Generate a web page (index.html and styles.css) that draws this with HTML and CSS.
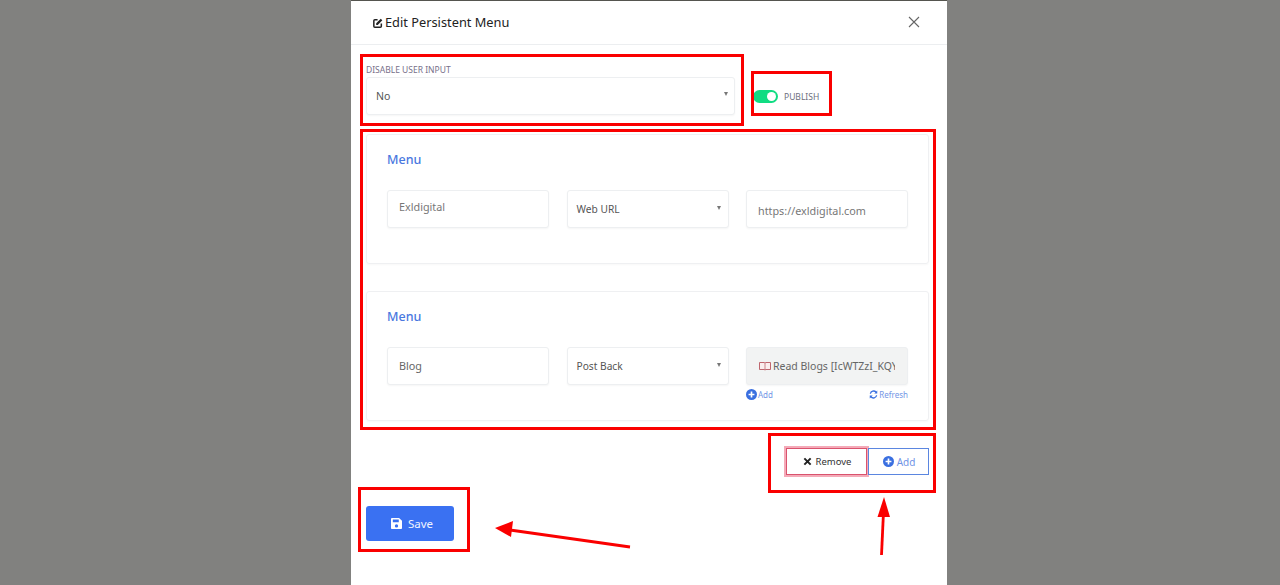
FILE: index.html
```html
<!DOCTYPE html>
<html lang="en">
<head>
<meta charset="utf-8">
<title>Edit Persistent Menu</title>
<link rel="stylesheet" href="styles.css">
</head>
<body>
<div class="modal">
  <header class="modal-header">
    <h1 class="modal-title">
      <svg class="icon-edit" viewBox="0 0 12 12"><path d="M5.500 2H2.200C1.500 2 1 2.500 1 3.200v6.600C1 10.500 1.500 11 2.200 11h6.600c.7 0 1.200-.5 1.200-1.200V6.500" fill="none" stroke="#222" stroke-width="1.800"/><path d="M3.800 6.400 9.300.9l1.900 1.900L5.700 8.300H3.800z" fill="#222"/></svg>
      <span>Edit Persistent Menu</span>
    </h1>
    <svg class="icon-close" viewBox="0 0 12 12"><path d="M1 1l10 10M11 1 1 11" fill="none" stroke="#666" stroke-width="1.100"/></svg>
  </header>
  <div class="modal-body">
    <div class="top-row">
      <div class="field-main">
        <label class="field-label">DISABLE USER INPUT</label>
        <div class="control select-main"><span>No</span><i class="caret"></i></div>
      </div>
      <div class="publish">
        <span class="toggle"><i class="knob"></i></span>
        <span class="publish-label">PUBLISH</span>
      </div>
    </div>

    <section class="card card-first">
      <h2 class="card-title">Menu</h2>
      <div class="card-grid">
        <div class="control text-high">Exldigital</div>
        <div class="control select-dark"><span>Web URL</span><i class="caret"></i></div>
        <div class="control text-low">https://exldigital.com</div>
      </div>
    </section>

    <section class="card">
      <h2 class="card-title">Menu</h2>
      <div class="card-grid">
        <div class="control text-plain">Blog</div>
        <div class="control select-dark"><span>Post Back</span><i class="caret"></i></div>
        <div class="col-with-links">
          <div class="control control-disabled">
            <svg class="icon-book" viewBox="0 0 12 10"><path d="M.5 1.500h4.700c.4 0 .8.300.8.700 0-.4.400-.7.800-.7h4.700v7H7c-.5 0-1 .3-1 .6 0-.3-.5-.6-1-.6H.5z" fill="#fbeeee" stroke="#b9565f" stroke-width=".9"/><path d="M6 2.200v6.800" stroke="#b9565f" stroke-width=".7"/></svg>
            <span class="clip-text">Read Blogs [IcWTZzI_KQYM</span>
          </div>
          <div class="links">
            <span class="link"><svg class="icon-plus-small" viewBox="0 0 12 12"><circle cx="6" cy="6" r="6" fill="#3a6fe0"/><path d="M6 2.800v6.400M2.800 6h6.400" stroke="#fff" stroke-width="1.800"/></svg>Add</span>
            <span class="link"><svg class="icon-refresh" viewBox="0 0 12 12"><path d="M1.800 5A4.300 4.300 0 0 1 9.400 3M10.200 7A4.300 4.300 0 0 1 2.600 9" fill="none" stroke="#3a6fe0" stroke-width="1.700"/><path d="M11 .8v4H7zM1 11.200v-4h4z" fill="#3a6fe0"/></svg>Refresh</span>
          </div>
        </div>
      </div>
    </section>

    <div class="actions">
      <button class="btn btn-remove"><svg class="icon-x" viewBox="0 0 10 10"><path d="M1.500 1.500l7 7M8.500 1.500l-7 7" stroke="#222" stroke-width="2.200"/></svg>Remove</button>
      <button class="btn btn-add"><svg class="icon-plus" viewBox="0 0 12 12"><circle cx="6" cy="6" r="6" fill="#3a6fe0"/><path d="M6 2.800v6.400M2.800 6h6.400" stroke="#fff" stroke-width="1.800"/></svg>Add</button>
    </div>

    <button class="btn-save"><svg class="icon-save" viewBox="0 0 12 12"><path fill-rule="evenodd" d="M1.200 0h7.600L12 3v7.800c0 .7-.5 1.200-1.200 1.200H1.200C.5 12 0 11.500 0 10.800V1.200C0 .5.500 0 1.200 0zM2 1.500v3h6.500v-3zM6 6.800a1.800 1.800 0 1 0 0 3.600 1.800 1.800 0 0 0 0-3.600z" fill="#fff"/></svg>Save</button>
  </div>
</div>

<div class="mark mark-select"></div>
<div class="mark mark-publish"></div>
<div class="mark mark-cards"></div>
<div class="mark mark-actions"></div>
<div class="mark mark-save"></div>
<svg class="arrows" viewBox="0 0 1280 585">
  <path d="M630 547 510 530" stroke="#fa0000" stroke-width="2.800" fill="none"/>
  <path d="M495 528 513 521 511 537z" fill="#fa0000"/>
  <path d="M881.500 555 883.500 512" stroke="#fa0000" stroke-width="2.800" fill="none"/>
  <path d="M884 497 890 517 877.500 517z" fill="#fa0000"/>
</svg>
</body>
</html>
```

FILE: styles.css
```css
* { box-sizing: border-box; }

html, body { height: 100%; }

body {
  margin: 0;
  background: #81817f;
  overflow: hidden;
  font-family: "Noto Sans", "Open Sans", "Liberation Sans", sans-serif;
  color: #555;
}

.modal {
  width: 596px;
  height: 585px;
  margin-left: 351px;
  background: #fff;
  border-top: 1px solid #55554f;
  display: flex;
  flex-direction: column;
}

.modal-header {
  height: 44px;
  flex: none;
  display: flex;
  align-items: center;
  justify-content: space-between;
  padding: 0 27px 2px 22px;
  border-bottom: 1px solid #eceef0;
}

.modal-title {
  margin: 0;
  display: flex;
  align-items: center;
  gap: 2px;
  font-size: 12.800px;
  font-weight: 400;
  color: #222;
}

.icon-edit { width: 10px; height: 10px; margin-top: 2px; }
.icon-close { width: 12px; height: 12px; }

.modal-body {
  padding: 0 18px 0 15px;
  display: flex;
  flex-direction: column;
  align-items: stretch;
}

.top-row {
  display: flex;
  align-items: flex-start;
  margin-top: 18px;
}

.field-main { width: 369px; }

.field-label {
  display: block;
  height: 14px;
  font-size: 8.500px;
  line-height: 13px;
  color: #77708a;
}

.control {
  height: 38px;
  background: #fff;
  border: 1px solid #edeff1;
  border-radius: 3px;
  box-shadow: 0 1px 2px rgba(0, 0, 0, .04);
  display: flex;
  align-items: center;
  padding: 0 10px 0 11px;
  font-size: 10.800px;
  color: #666;
  position: relative;
  white-space: nowrap;
}

.select-main { font-size: 10.500px; padding-left: 9px; color: #555; }

.select-dark { padding-left: 9px; color: #555; font-size: 10.200px; }
.text-high { padding-bottom: 6px; color: #777; }
.text-low { padding-top: 2px; color: #777; }
.text-plain { padding-bottom: 1px; color: #666; }

.caret {
  position: absolute;
  right: 7px;
  top: 15px;
  width: 0;
  height: 0;
  border-left: 2.500px solid transparent;
  border-right: 2.500px solid transparent;
  border-top: 4px solid #777;
}

.select-main .caret { right: 6px; top: 14px; }

.publish {
  display: flex;
  align-items: center;
  gap: 6px;
  margin: 27px 0 0 18px;
}

.toggle {
  width: 25px;
  height: 13px;
  border-radius: 7px;
  background: #10dc82;
  display: flex;
  align-items: center;
  justify-content: flex-end;
  padding-right: 2px;
}

.knob { width: 9px; height: 9px; border-radius: 50%; background: #fff; }

.publish-label { font-size: 8.500px; color: #6c6f80; }

.card {
  height: 130px;
  margin-top: 27px;
  padding: 15px 20px 0;
  border: 1px solid #eff0f2;
  border-radius: 3px;
  box-shadow: 0 1px 2px rgba(0, 0, 0, .03);
  flex: none;
}

.card-first { margin-top: 19px; }

.card-title {
  margin: 0 0 21px;
  height: 19px;
  font-size: 12.500px;
  line-height: 19px;
  font-weight: 500;
  color: #4a78e0;
}

.card-grid {
  display: grid;
  grid-template-columns: repeat(3, 162px);
  column-gap: 17.500px;
}

.control-disabled {
  background: #f2f3f3;
  padding-left: 12px;
  padding-right: 12px;
  gap: 2px;
  color: #666;
}

.icon-book { width: 12px; height: 10px; flex: none; }

.clip-text { overflow: hidden; white-space: nowrap; font-size: 10.500px; }

.links {
  display: flex;
  justify-content: space-between;
  align-items: center;
  margin-top: 3px;
  height: 12px;
}

.link {
  display: inline-flex;
  align-items: center;
  gap: 1px;
  font-size: 8px;
  color: #7396e6;
}

.icon-plus-small { width: 11px; height: 11px; }
.icon-refresh { width: 9px; height: 9px; }

.actions {
  display: flex;
  justify-content: flex-end;
  margin-top: 27px;
  flex: none;
}

.btn {
  height: 27px;
  background: #fff;
  display: inline-flex;
  align-items: center;
  justify-content: center;
  font-family: inherit;
  font-size: 9.500px;
  padding: 0;
  cursor: pointer;
}

.btn-remove {
  width: 81px;
  gap: 4px;
  padding-left: 1px;
  color: #333;
  border: 1px solid #d9536e;
  box-shadow: 0 0 0 2px #f4aab8;
  margin-right: 1px;
}

.btn-add {
  width: 61px;
  gap: 3px;
  padding-left: 1px;
  color: #6f93e6;
  border: 1px solid #5b86e0;
  font-size: 10px;
}

.icon-x { width: 9px; height: 9px; }
.icon-plus { width: 11px; height: 11px; }

.btn-save {
  width: 88px;
  height: 35px;
  margin-top: 31px;
  padding: 0 0 0 4px;
  background: #3a71f2;
  border: 0;
  border-radius: 3px;
  display: flex;
  align-items: center;
  justify-content: center;
  gap: 6px;
  color: #f0f4ff;
  font-family: inherit;
  font-size: 11.500px;
  cursor: pointer;
}

.icon-save { width: 11px; height: 11px; }

.mark {
  position: absolute;
  border: 3px solid #fa0000;
  pointer-events: none;
}

.mark-select { left: 360px; top: 54px; width: 384px; height: 72px; }
.mark-publish { left: 751px; top: 71px; width: 81px; height: 45px; }
.mark-cards { left: 360px; top: 129px; width: 576px; height: 301px; }
.mark-actions { left: 768px; top: 433px; width: 168px; height: 60px; }
.mark-save { left: 358px; top: 487px; width: 112px; height: 65px; }

.arrows {
  position: absolute;
  left: 0;
  top: 0;
  width: 1280px;
  height: 585px;
  pointer-events: none;
}
```
